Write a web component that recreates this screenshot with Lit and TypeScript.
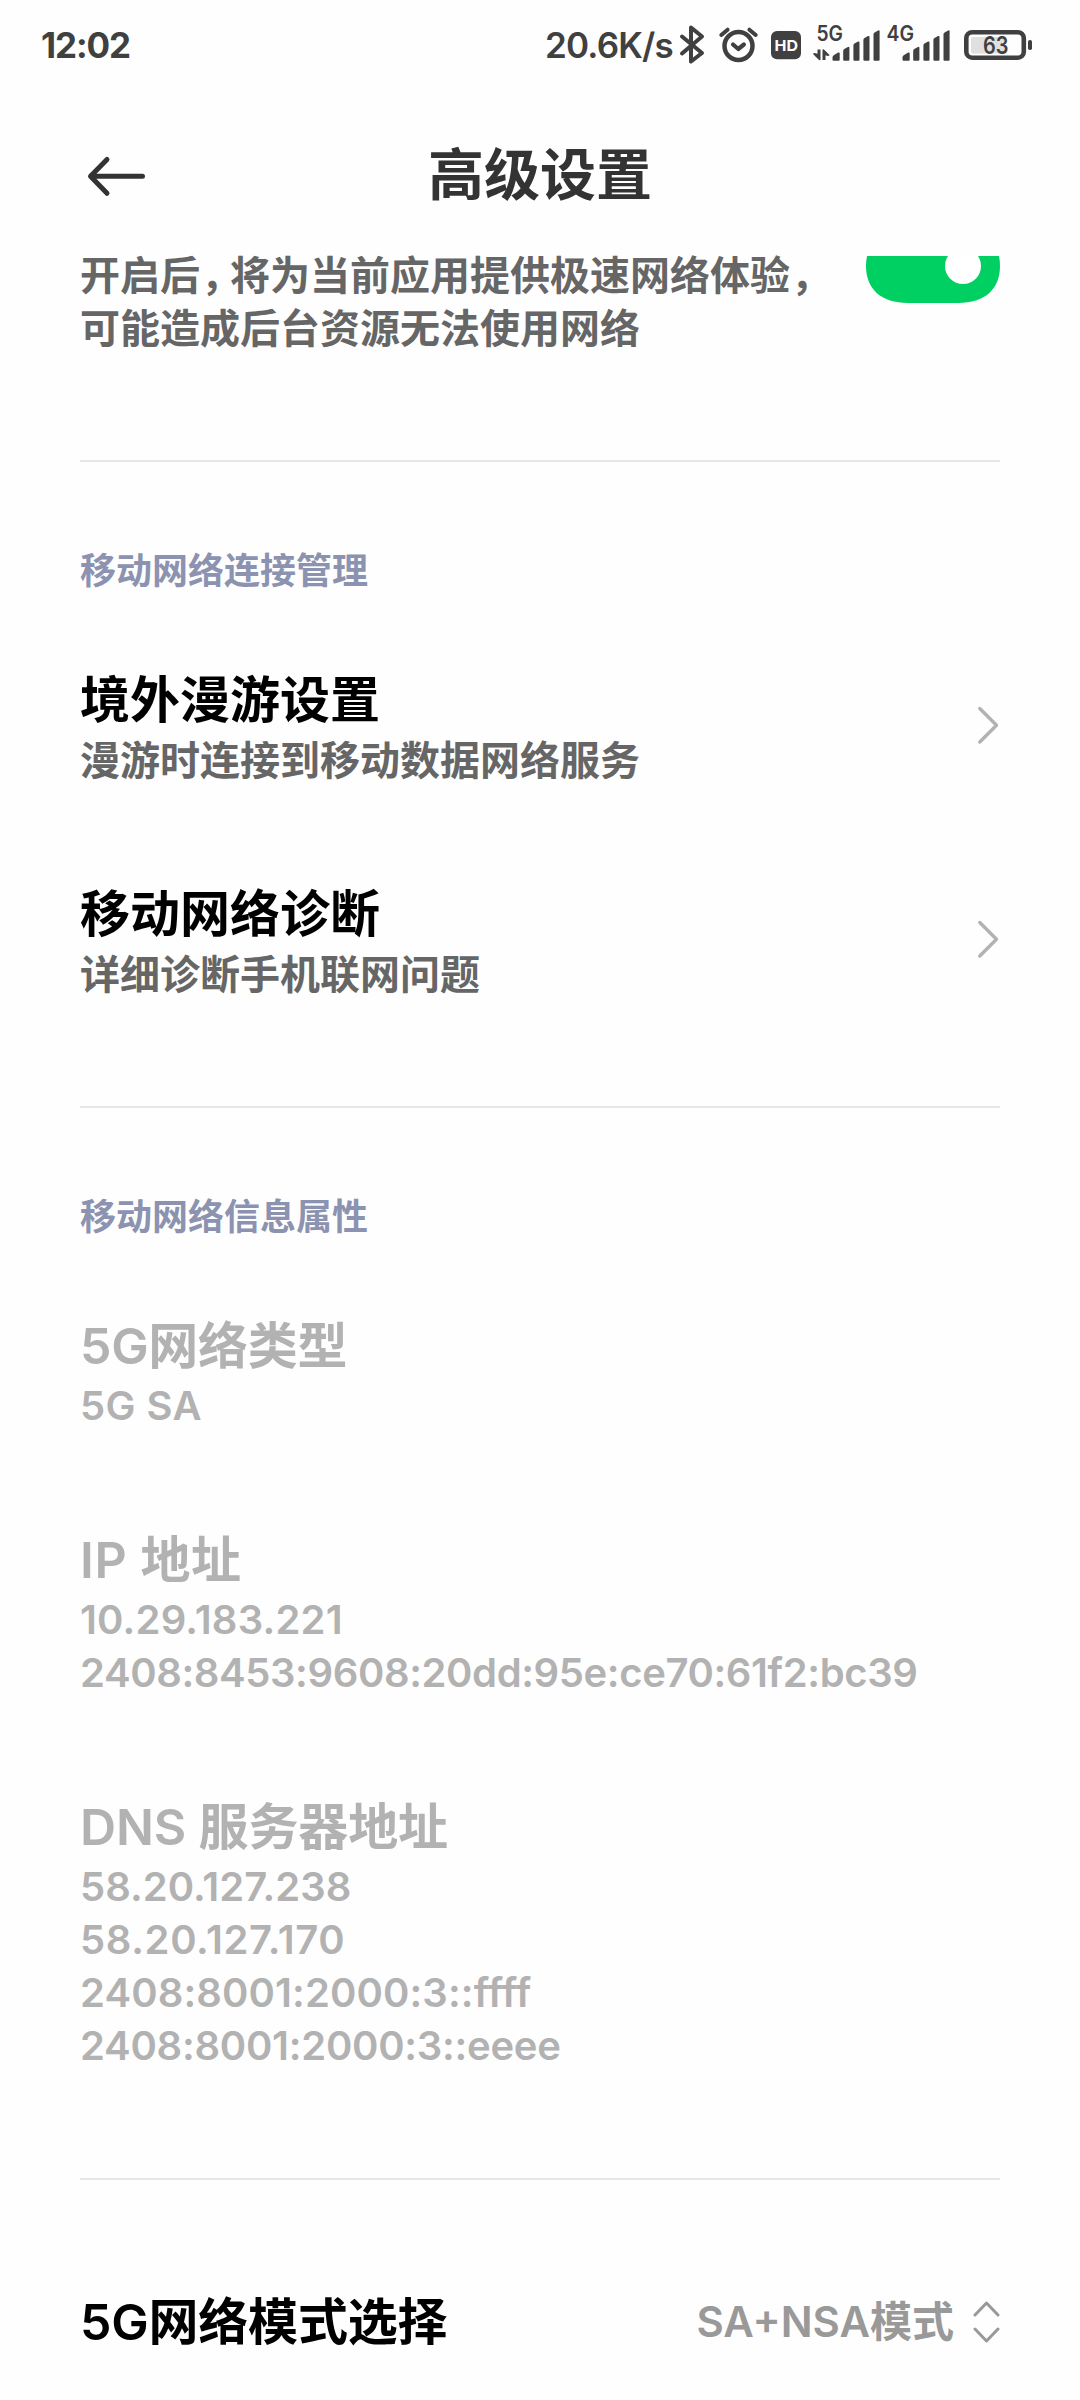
import { LitElement, html, css, svg } from "lit";
import { customElement, property } from "lit/decorators.js";
import { classMap } from "lit/directives/class-map.js";

interface Line {
  text: string;
  /** extra tracking in px */
  track?: number;
  cjk?: boolean;
}

const bars = (x: number) => svg`
  <path d="M${x} 60.7v-3.2q0-1.400 1.200-2.300l4.500-2.600q1.500-.6 1.500.8v6.300q0 1-1 1h-5.200q-1 0-1-1z"/>
  <path d="M${x + 10.7} 59.700v-8.600q0-1.300 1.100-2l3.600-2.200q1.500-.6 1.500.8v12q0 1-1 1h-4.200q-1 0-1-1z"/>
  <path d="M${x + 20.9} 59.700v-14.200q0-1.300 1.100-2l3.500-1.900q1.500-.6 1.500.8v17.300q0 1-1 1h-4.100q-1 0-1-1z"/>
  <path d="M${x + 30.9} 59.700v-19.700q0-1.300 1.100-2l3.500-1.900q1.500-.6 1.500.8v22.800q0 1-1 1h-4.100q-1 0-1-1z"/>
  <path d="M${x + 41} 59.700v-25.300q0-1.300 1.100-2l3.500-1.900q1.500-.6 1.500.8v28.400q0 1-1 1h-4.100q-1 0-1-1z"/>`;

@customElement("status-bar")
export class StatusBar extends LitElement {
  static styles = css`
    :host {
      display: flex;
      height: 90px;
      padding: 0 48px 0 41px;
      justify-content: space-between;
      color: #404040;
      fill: #404040;
      font-weight: 700;
    }
    .clock {
      font-size: 35px;
      line-height: 90px;
      letter-spacing: -1.1px;
    }
    .right {
      display: flex;
    }
    .speed {
      font-size: 35px;
      line-height: 90px;
      width: 132px;
      white-space: nowrap;
      letter-spacing: -0.8px;
      font-weight: 600;
    }
    svg {
      display: block;
      height: 90px;
      flex: none;
    }
    .line {
      fill: none;
      stroke: #404040;
      stroke-linecap: round;
      stroke-linejoin: round;
    }
    .hd {
      fill: #fefefe;
      font-size: 15px;
    }
    .net {
      font-size: 21px;
      font-weight: 600;
    }
    .level {
      font-size: 24px;
      font-weight: 600;
    }
  `;

  render() {
    return html`
      <span class="clock">12:02</span>
      <div class="right">
        <span class="speed">20.6K/s</span>
        <svg width="30" viewBox="677 0 30 90">
          <path class="line" stroke-width="4" d="M682 36.500L702 53L691 61.500V27.500L702 36.500L682 53.500"/>
        </svg>
        <svg width="58" viewBox="707 0 58 90">
          <g class="line">
            <circle cx="738.500" cy="46" r="14" stroke-width="4.500"/>
            <path stroke-width="4.200" d="M733 44.500l5.300 4.500 5.600-4.500"/>
            <path stroke-width="4" d="M721.300 35l6.300-5.300M755.700 35l-6.300-5.300"/>
          </g>
        </svg>
        <svg width="42" viewBox="765 0 42 90">
          <rect x="771" y="31" width="30" height="28.300" rx="6"/>
          <text class="hd" x="774.500" y="50.700" textLength="23.500" lengthAdjust="spacingAndGlyphs">HD</text>
        </svg>
        <svg width="76" viewBox="807 0 76 90">
          <text class="net" x="816.500" y="40.900" textLength="26.500" lengthAdjust="spacingAndGlyphs">5G</text>
          <path d="M817.500 49.500h3v10.500q-1 .5-2-.5l-5.500-5.500q.5-1.500 2.500-.8l2 .5zM822.500 60v-10.500q1-.5 2 .5l5 5q-.5 1.500-2.500.8l-1.500-.5v4.700z"/>
          ${bars(832.5)}
        </svg>
        <svg width="74" viewBox="883 0 74 90">
          <text class="net" x="886.500" y="40.900" textLength="27.500" lengthAdjust="spacingAndGlyphs">4G</text>
          ${bars(902.5)}
        </svg>
        <svg width="75" viewBox="957 0 75 90">
          <rect class="line" x="966.300" y="32.200" width="57.500" height="25.500" rx="6" stroke-width="4.600"/>
          <path fill="#e0e0e0" d="M973 37h31v16.500h-31q-2 0-2-2v-12.500q0-2 2-2z"/>
          <rect x="1028" y="40" width="4" height="10" rx="1.800"/>
          <text class="level" x="983" y="54.200" textLength="25.500" lengthAdjust="spacingAndGlyphs">63</text>
        </svg>
      </div>
    `;
  }
}

@customElement("setting-item")
export class SettingItem extends LitElement {
  @property({ attribute: false }) heading: Line = { text: "" };
  @property({ attribute: false }) lines: Line[] = [];
  @property({ type: Boolean }) arrow = false;
  @property({ type: Boolean, reflect: true }) disabled = false;

  static styles = css`
    :host {
      display: flex;
      align-items: center;
      justify-content: space-between;
      padding: 47px 0;
      color: #000;
    }
    .heading {
      box-sizing: border-box;
      font-size: 50px;
      line-height: 67px;
      height: 67px;
      padding-top: 1px;
      white-space: pre;
    }
    .line {
      box-sizing: border-box;
      font-size: 40px;
      line-height: 53px;
      height: 53px;
      color: #666;
      white-space: pre;
    }
    .cjk {
      padding-top: 1px;
    }
    :host([disabled]) .heading,
    :host([disabled]) .line {
      color: #b2b2b2;
    }
    svg {
      display: block;
      fill: none;
      stroke: #b2b2b2;
      stroke-width: 3.4;
      stroke-linecap: round;
      stroke-linejoin: round;
    }
  `;

  render() {
    return html`
      <div>
        <div class="heading" style="letter-spacing:${this.heading.track ?? 0}px">${this.heading.text}</div>
        ${this.lines.map(
          (l) =>
            html`<div class=${classMap({ line: true, cjk: !!l.cjk })} style="letter-spacing:${l.track ?? 0}px">${l.text}</div>`
        )}
      </div>
      ${this.arrow
        ? html`<svg width="24" height="40" viewBox="0 0 24 40"><path d="M3.800 2.500L20.500 19.200L3.800 36"/></svg>`
        : ""}
    `;
  }
}

@customElement("app-root")
export class AppRoot extends LitElement {
  static styles = css`
    :host {
      display: flex;
      flex-direction: column;
      width: 1080px;
      height: 2400px;
      overflow: hidden;
      background: #fefefe;
      font-family: Inter, "Noto Sans CJK SC", sans-serif;
      font-weight: 600;
    }
    .bar {
      display: grid;
      grid-template-columns: 100px 1fr 100px;
      align-items: center;
      height: 158px;
      padding: 14px 80px 0;
      box-sizing: border-box;
      flex: none;
    }
    .back {
      display: block;
      fill: none;
      stroke: #333;
      stroke-width: 5;
      stroke-linecap: round;
      stroke-linejoin: round;
    }
    .title {
      margin: 0 0 2px;
      font-size: 56px;
      line-height: 80px;
      font-weight: 700;
      text-align: center;
      color: #333;
    }
    .list {
      flex: 1;
      min-height: 0;
      overflow: hidden;
      padding: 0 80px;
    }
    .boost {
      display: flex;
      justify-content: space-between;
      align-items: flex-start;
      height: 153px;
    }
    .desc {
      padding-top: 1px;
      font-size: 40px;
      line-height: 53px;
      color: #666;
      white-space: nowrap;
    }
    .comma {
      font-feature-settings: "halt";
      margin: 0 9px 0 1px;
    }
    .toggle {
      display: block;
      margin-top: 8px;
    }
    .rule {
      height: 2px;
      margin-top: 59px;
      background: #e6e6e6;
    }
    .group {
      padding: 85px 0 24px;
      font-size: 36px;
      line-height: 48px;
      height: 48px;
      color: #8c93b0;
    }
    .mode {
      display: flex;
      align-items: center;
      height: 165px;
      margin-top: 59px;
    }
    .name {
      flex: 1;
      padding-top: 2px;
      font-size: 50px;
      line-height: 67px;
      letter-spacing: -0.2px;
      color: #000;
    }
    .value {
      font-size: 42px;
      line-height: 60px;
      color: #999;
      margin-right: 18px;
    }
    .updown {
      display: block;
      fill: none;
      stroke: #999;
      stroke-width: 3;
      stroke-linecap: round;
      stroke-linejoin: round;
    }
  `;

  render() {
    return html`
      <status-bar></status-bar>
      <header class="bar">
        <svg class="back" width="70" height="44" viewBox="80 154 70 44">
          <path d="M142.500 176.300H91M107 159.500L90.500 176.300L107 193.300"/>
        </svg>
        <h1 class="title" lang="zh-CN">高级设置</h1>
      </header>
      <main class="list" lang="zh-CN">
        <section class="boost">
          <div class="desc">开启后<span class="comma">，</span>将为当前应用提供极速网络体验<span class="comma">，</span><br />可能造成后台资源无法使用网络</div>
          <svg class="toggle" width="134" height="47" viewBox="0 27 134 47">
            <path fill="#00d062" d="M0 37C0 14 15 0 42 0H92C119 0 134 14 134 37S119 74 92 74H42C15 74 0 60 0 37z"/>
            <circle cx="97" cy="37" r="18" fill="#fff"/>
          </svg>
        </section>
        <div class="rule"></div>
        <div class="group">移动网络连接管理</div>
        <setting-item
          arrow
          .heading=${{ text: "境外漫游设置" }}
          .lines=${[{ text: "漫游时连接到移动数据网络服务", cjk: true }]}
        ></setting-item>
        <setting-item
          arrow
          .heading=${{ text: "移动网络诊断" }}
          .lines=${[{ text: "详细诊断手机联网问题", cjk: true }]}
        ></setting-item>
        <div class="rule"></div>
        <div class="group">移动网络信息属性</div>
        <setting-item
          disabled
          .heading=${{ text: "5G网络类型", track: -0.3 }}
          .lines=${[{ text: "5G SA", track: 0.4 }]}
        ></setting-item>
        <setting-item
          disabled
          .heading=${{ text: "IP 地址", track: 0.6 }}
          .lines=${[
            { text: "10.29.183.221", track: 0.2 },
            { text: "2408:8453:9608:20dd:95e:ce70:61f2:bc39", track: -0.38 },
          ]}
        ></setting-item>
        <setting-item
          disabled
          .heading=${{ text: "DNS 服务器地址", track: -0.15 }}
          .lines=${[
            { text: "58.20.127.238", track: 0.05 },
            { text: "58.20.127.170", track: 0.65 },
            { text: "2408:8001:2000:3::ffff", track: 0.12 },
            { text: "2408:8001:2000:3::eeee", track: -0.25 },
          ]}
        ></setting-item>
        <div class="rule"></div>
        <div class="mode">
          <span class="name">5G网络模式选择</span>
          <span class="value">SA+NSA模式</span>
          <svg class="updown" width="28" height="44" viewBox="0 0 28 44">
            <path d="M3 15L14.500 3L26 15M3 29L14.500 41L26 29"/>
          </svg>
        </div>
      </main>
    `;
  }
}
